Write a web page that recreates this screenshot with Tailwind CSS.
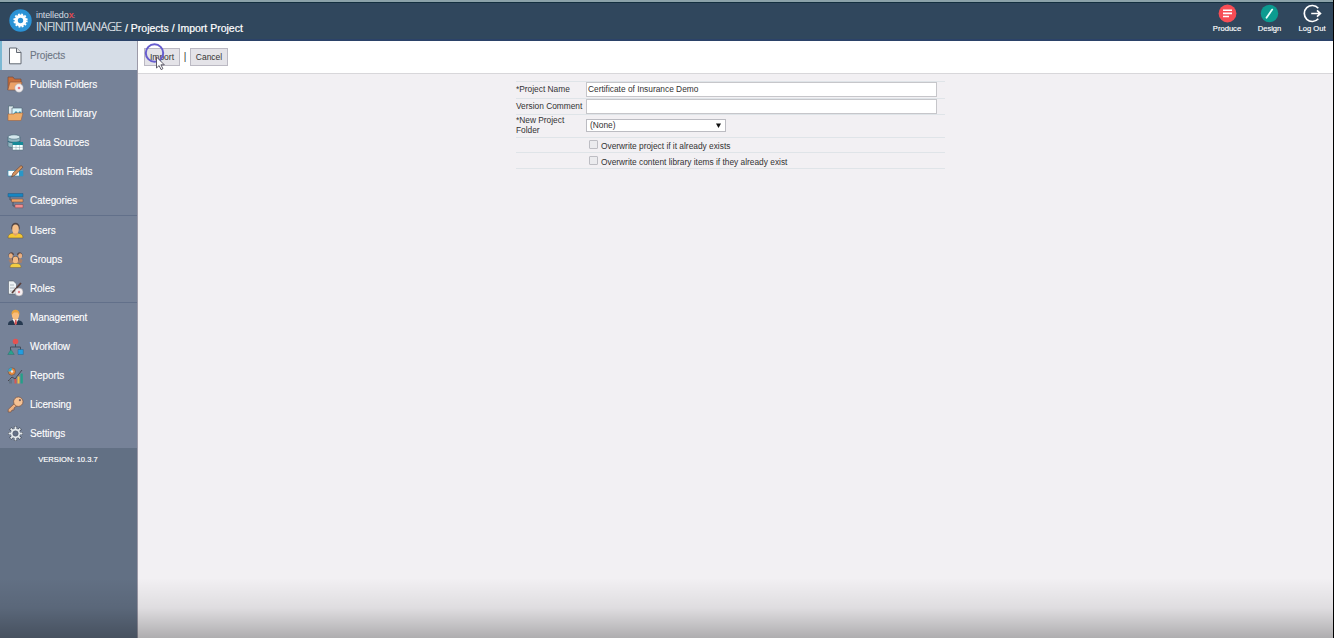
<!DOCTYPE html>
<html lang="en">
<head>
<meta charset="utf-8">
<title>Import Project</title>
<script src="https://cdn.jsdelivr.net/npm/@tailwindcss/browser@4"></script>
</head>
<body class="h-[638px] w-[1334px] overflow-hidden bg-[#f2f0f3] font-['Liberation_Sans',Arial,sans-serif]">
<div class="relative flex h-[638px] w-[1334px] flex-col border-r border-black">
  <header class="flex h-[41px] shrink-0 items-start justify-between border-t-2 border-b-2 border-t-[#8ba2a9] border-b-[#2b4268] bg-[#30475d] text-white shadow-[inset_0_1px_0_#132f3f]">
    <div class="flex pl-[9px]">
      <svg class="mt-[7px] h-[23px] w-[23px]" viewBox="0 0 23 23"><circle cx="11.5" cy="11.5" r="11.2" fill="#2b93d6"/><circle cx="11.5" cy="11.5" r="4.3" fill="none" stroke="#fff" stroke-width="3.2"/><circle cx="11.5" cy="11.5" r="6.3" fill="none" stroke="#fff" stroke-width="1.7" stroke-dasharray="1.8 1.5"/></svg>
      <div class="ml-[4px] mt-[8px] w-[89px] whitespace-nowrap">
        <div class="h-[10px] text-[9px] leading-[10px] tracking-[-0.1px] text-[#d5dce3]">intelledo<span class="font-bold text-[#e04a50]">x</span><span class="text-[6px]">:</span></div>
        <div class="h-[14px] font-['Open_Sans','Liberation_Sans',sans-serif] text-[12.200px] font-light leading-[14px] tracking-[-0.600px] text-[#e8edf2] [-webkit-text-stroke:0.2px_#e8edf2]">INFINITI<span class="ml-[2px]">MANAGE</span></div>
      </div>
      <div class="mt-[20px] whitespace-nowrap text-[10.500px] leading-[12px] [-webkit-text-stroke:0.2px_white]">/ Projects / Import Project</div>
    </div>
    <nav class="mt-[2px] flex text-center text-[7.600px] leading-[9px] [-webkit-text-stroke:0.15px_white]">
      <div class="flex w-[42px] flex-col items-center"><svg class="h-[19px] w-[19px]" viewBox="0 0 19 19"><circle cx="9.5" cy="9.5" r="8.9" fill="#f74d55"/><path d="M5 6.3h9M5 9.4h9M5 12.5h6" stroke="#fff" stroke-width="1.6"/></svg><span class="mt-px">Produce</span></div>
      <div class="flex w-[43px] flex-col items-center"><svg class="h-[19px] w-[19px]" viewBox="0 0 19 19"><circle cx="9.5" cy="9.5" r="8.7" fill="#0c9b90"/><path d="M6.5 13.8L12.2 5.6" stroke="#e6fffb" stroke-width="1.8" stroke-linecap="round"/></svg><span class="mt-px">Design</span></div>
      <div class="flex w-[42px] flex-col items-center"><svg class="h-[19px] w-[19px]" viewBox="0 0 19 19"><path d="M15.3 4.2A8 8 0 1 0 15.3 14.8M8.2 9.5h9M14 6.4l3.4 3.1L14 12.6" fill="none" stroke="#fff" stroke-width="1.7"/></svg><span class="mt-px whitespace-nowrap">Log Out</span></div>
    </nav>
  </header>

  <div class="flex min-h-0 flex-1">
    <aside class="w-[138px] shrink-0 border-r border-[#9c9aa8] bg-[#627084] text-[10px] tracking-[-0.120px] text-white">
      <div class="bg-[#768298] [-webkit-text-stroke:0.1px_currentColor]">
        <div class="flex h-[29px] items-center border-l-2 border-[#7bb8d3] bg-[#d6dde7] pl-[5px] text-[#6c7583]"><svg class="h-[18px] w-[17px]" viewBox="0 0 17 18"><path d="M2.5 1h7l4.5 4.5v11.300h-11.500z" fill="#fff" stroke="#626873"/><path d="M9.500 1v4.500h4.500" fill="#e8e8e8" stroke="#626873"/></svg><span class="ml-[6px]">Projects</span></div>
        <div class="flex h-[29px] items-center pl-[7px]"><svg class="h-[17px] w-[17px]" viewBox="0 0 17 17"><path d="M1 14V1h5l1.500 2H14v3" fill="#c96e3a" stroke="#744b3d" stroke-width=".7"/><path d="M.8 14L3 6h12l-1.500 8z" fill="#eca167" stroke="#84503c" stroke-width=".6"/><circle cx="12" cy="12" r="4.2" fill="#f3eef0" stroke="#aaa" stroke-width=".5"/><circle cx="12" cy="12" r="1.300" fill="#e9777c"/></svg><span class="ml-[6px]">Publish Folders</span></div>
        <div class="flex h-[29px] items-center pl-[7px]"><svg class="h-[17px] w-[17px]" viewBox="0 0 17 17"><path d="M1.500 1h5v11h-5z" fill="#dce6eb" stroke="#526d79" stroke-width=".7"/><path d="M5 3h10v7H5z" fill="#d8f5fb" stroke="#566b79" stroke-width=".7"/><path d="M6 9l3-3 2 2 2-2 2 3z" fill="#3498b6"/><path d="M1 9h6l1-1h8l-2 7.500H1z" fill="#efad69" stroke="#9b6344" stroke-width=".6"/></svg><span class="ml-[6px]">Content Library</span></div>
        <div class="flex h-[29px] items-center pl-[7px]"><svg class="h-[17px] w-[17px]" viewBox="0 0 17 17"><path d="M1 3v9c0 2 12 2 12 0V3" fill="#92b6c1" stroke="#456777" stroke-width=".6"/><ellipse cx="7" cy="3" rx="6" ry="2.200" fill="#d3e7ed" stroke="#456777" stroke-width=".6"/><path d="M1 7c1 2 11 2 12 0" fill="none" stroke="#366d80" stroke-width="1.300"/><path d="M5.500 9h10.500v7H5.500z" fill="#f5ffff" stroke="#54707b" stroke-width=".5"/><path d="M5.500 8h10.500v3H5.500z" fill="#168a98"/><path d="M9 11v5M12.500 11v5M6 13.500h10" stroke="#8ba4ae" stroke-width=".5"/></svg><span class="ml-[6px]">Data Sources</span></div>
        <div class="flex h-[29px] items-center pl-[7px]"><svg class="h-[17px] w-[17px]" viewBox="0 0 17 17"><path d="M1 7.500h15v5.500H1z" fill="#fbffff" stroke="#3d91b2" stroke-width=".7"/><path d="M12 8h4v5h-4z" fill="#2997c8"/><path d="M4.500 14l1.500-4L14 2.500l2 1.500-7.500 8z" fill="#d4935c" stroke="#69483c" stroke-width=".7"/></svg><span class="ml-[6px]">Custom Fields</span></div>
        <div class="flex h-[29px] items-center pl-[7px]"><svg class="h-[17px] w-[17px]" viewBox="0 0 17 17"><path d="M3 4v4h3M6 9v5h3" fill="none" stroke="#485265"/><path d="M1 1.500h15v3.300H1z" fill="#1686c2" stroke="#28547a" stroke-width=".5"/><path d="M4.500 7H16v3H4.500z" fill="#f0a466" stroke="#68473f" stroke-width=".5"/><path d="M8 12.500h8v3.300H8z" fill="#f38d8d" stroke="#744950" stroke-width=".5"/></svg><span class="ml-[6px]">Categories</span></div>
        <div class="border-t border-[#62708a]"></div>
        <div class="flex h-[29px] items-center pl-[7px]"><svg class="h-[17px] w-[17px]" viewBox="0 0 17 17"><path d="M1 16c0-4 3-4.500 5.500-5h4c2.500.5 5.500 1 5.500 5z" fill="#f5c832" stroke="#76603c" stroke-width=".6"/><path d="M6 9h5v3l-2.500 2L6 12z" fill="#dfa06d"/><path d="M4.500 7.500C2.500-1.500 14.500-1.500 12.500 7.500z" fill="#514647"/><ellipse cx="8.500" cy="7" rx="3.300" ry="4.500" fill="#f5c08b"/></svg><span class="ml-[6px]">Users</span></div>
        <div class="flex h-[29px] items-center pl-[7px]"><svg class="h-[17px] w-[17px]" viewBox="0 0 17 17"><path d="M1.500 5.500C1 0 7 0 7 4M10 4c0-4 6-4 5.500 1.500" fill="#5b4845"/><ellipse cx="3.800" cy="4.800" rx="2" ry="2.600" fill="#eab080"/><ellipse cx="13.200" cy="4.800" rx="2" ry="2.600" fill="#eab080"/><path d="M1.500 9l3-2h8l3 2-1 3H3z" fill="#a77f69"/><path d="M5.200 9.500c-1-6 7.600-6 6.600 0z" fill="#514647"/><ellipse cx="8.500" cy="9" rx="2.700" ry="3.400" fill="#f3ba83"/><path d="M3 16.500c0-4 3-4 5.500-4s5.500 0 5.500 4z" fill="#f2cd42" stroke="#76603c" stroke-width=".5"/></svg><span class="ml-[6px]">Groups</span></div>
        <div class="flex h-[28px] items-center pl-[7px]"><svg class="h-[17px] w-[17px]" viewBox="0 0 17 17"><path d="M1.500 1h5l3 3v10h-8z" fill="#eef2f4" stroke="#59616d" stroke-width=".6"/><path d="M3 5h4M3 8h5M3 11h4" stroke="#9ba4ac" stroke-width=".8"/><path d="M14 3L5 13" stroke="#593f3b" stroke-width="1.800"/><circle cx="12" cy="12" r="4" fill="#f5eff2" stroke="#999" stroke-width=".5"/><circle cx="12" cy="12" r="1.200" fill="#e6838a"/></svg><span class="ml-[6px]">Roles</span></div>
        <div class="border-t border-[#62708a]"></div>
        <div class="flex h-[29px] items-center pl-[7px]"><svg class="h-[17px] w-[17px]" viewBox="0 0 17 17"><path d="M1 16c0-4 3-4.500 5.500-5h4c2.500.5 5.500 1 5.500 5z" fill="#263950"/><path d="M5.500 10h6l-3 6z" fill="#f5f5f5"/><path d="M8 11h1.500l.5 4-1.300 1-1.200-1z" fill="#d35252"/><ellipse cx="8.500" cy="6" rx="3.600" ry="4.900" fill="#f8bd7b"/><path d="M4.700 6C3-1 14-1 12.300 6l-1.500-2.500H7z" fill="#e8a33d"/></svg><span class="ml-[6px]">Management</span></div>
        <div class="flex h-[29px] items-center pl-[7px]"><svg class="h-[17px] w-[17px]" viewBox="0 0 17 17"><path d="M8.500 5v4M3.500 13V9h10v4" fill="none" stroke="#454e5c"/><circle cx="8.500" cy="3.500" r="2.800" fill="#e65250"/><path d="M.8 16.500l3.200-5 3.200 5z" fill="#28a38d" stroke="#356c6c" stroke-width=".5"/><path d="M11 11.500h5.300v5H11z" fill="#239edf" stroke="#2b638c" stroke-width=".5"/></svg><span class="ml-[6px]">Workflow</span></div>
        <div class="flex h-[29px] items-center pl-[7px]"><svg class="h-[17px] w-[17px]" viewBox="0 0 17 17"><circle cx="4.800" cy="4.500" r="3.700" fill="#e78b3d" stroke="#544e53" stroke-width=".6"/><path d="M4.800 4.500V.8A3.700 3.700 0 0 0 1.100 4.500z" fill="#32a6d1"/><circle cx="5" cy="4.500" r="1.200" fill="#e8edf0"/><path d="M1 14l4-4 3 2 7-9" fill="none" stroke="#49464f"/><path d="M7.500 12h2v4.500h-2z" fill="#db5750"/><path d="M10.500 9.500h2v7h-2z" fill="#eebe45"/><path d="M13.500 6.500h2.300v10h-2.300z" fill="#24a088"/><path d="M2 12.500h3v4H2z" fill="#657585"/></svg><span class="ml-[6px]">Reports</span></div>
        <div class="flex h-[29px] items-center pl-[7px]"><svg class="h-[17px] w-[17px]" viewBox="0 0 17 17"><path d="M8.500 6.500L1.200 13.500V16H4l1-2h2v-2l3.800-3" fill="#edb181" stroke="#78523f" stroke-width=".7"/><circle cx="11.300" cy="5.700" r="4.700" fill="#f5c294" stroke="#78523f" stroke-width=".7"/><circle cx="12.900" cy="4.200" r="1.100" fill="#796363"/></svg><span class="ml-[6px]">Licensing</span></div>
        <div class="flex h-[29px] items-center pl-[7px]"><svg class="h-[17px] w-[17px]" viewBox="0 0 17 17"><g stroke="#444d5b" stroke-width="3.200"><path d="M8.500 1v15M1 8.500h15M3.300 3.300l10.400 10.400M13.700 3.300L3.300 13.700"/></g><g stroke="#e4e9ed" stroke-width="1.900"><path d="M8.500 1.500v14M1.500 8.500h14M3.700 3.700l9.600 9.600M13.300 3.700l-9.600 9.600"/></g><circle cx="8.500" cy="8.500" r="4.700" fill="#e4e9ed"/><circle cx="8.500" cy="8.500" r="2.700" fill="#657187" stroke="#48515f" stroke-width=".5"/></svg><span class="ml-[6px]">Settings</span></div>
      </div>
      <div class="pt-[7px] pr-[1px] text-center text-[7.600px] leading-[10px] tracking-normal [-webkit-text-stroke:0.15px_white]">VERSION: 10.3.7</div>
    </aside>

    <main class="min-w-0 flex-1 text-[8.350px] text-[#333]">
      <div class="flex h-[33px] items-center border-b border-[#d8d7da] bg-white pl-[6px]">
        <button class="h-[18px] w-[36px] border border-[#bbb9c3] bg-[#e4e3e8] text-[8.500px] leading-[16px]">Import</button>
        <span class="w-[10px] text-center text-[10px] leading-[14px]">|</span>
        <button class="h-[18px] w-[38px] border border-[#bbb9c3] bg-[#e4e3e8] text-[8.500px] leading-[16px]">Cancel</button>
      </div>
      <form class="ml-[378px] mt-[7px] w-[429px] border-t border-[#dfe4e8]">
        <div class="flex h-[17px] items-center border-b border-[#dfe4e8] pb-px"><label class="w-[70px] whitespace-nowrap">*Project Name</label><input class="h-[15px] w-[351px] border border-[#c6c6ca] bg-white px-[1px] pb-px" value="Certificate of Insurance Demo"></div>
        <div class="flex h-[16px] items-center border-b border-[#dfe4e8]"><label class="w-[70px] whitespace-nowrap">Version Comment</label><input class="h-[15px] w-[351px] border border-[#c6c6ca] bg-white px-[1px]"></div>
        <div class="flex h-[23px] items-center border-b border-[#dfe4e8] pb-[2px]"><label class="w-[70px] leading-[10px]">*New Project<br>Folder</label><div class="flex h-[13px] w-[140px] items-center justify-between border border-[#bcbcc2] bg-white pl-[3px] pr-[4px]"><span>(None)</span><svg class="h-[5px] w-[5px]" viewBox="0 0 5 5"><path d="M0 .5h5L2.500 5z" fill="#111"/></svg></div></div>
        <div class="flex h-[15px] items-center border-b border-[#dfe4e8] pl-[73px]"><span class="mb-[2px] h-[9px] w-[9px] rounded-[1px] border border-[#bdbdc3] bg-[#ebebee]"></span><span class="ml-[3px] mt-[2px]">Overwrite project if it already exists</span></div>
        <div class="flex h-[16px] items-center border-b border-[#dfe4e8] pl-[73px]"><span class="mb-px h-[9px] w-[9px] rounded-[1px] border border-[#bdbdc3] bg-[#ebebee]"></span><span class="ml-[3px] mt-[3px]">Overwrite content library items if they already exist</span></div>
      </form>
    </main>
  </div>
  <svg class="absolute left-[144px] top-[43px] h-[28px] w-[24px]" viewBox="0 0 24 28"><circle cx="10.500" cy="10" r="8.700" fill="none" stroke="#675dcf" stroke-width="2"/><path d="M12.500 14v11l2.600-2.400 2 4 1.800-.9-2-3.900h3.400z" fill="#fff" stroke="#4d4a58" stroke-width=".9"/></svg>
  <div class="pointer-events-none absolute bottom-0 left-0 h-[60px] w-[1333px] bg-linear-to-b from-black/0 via-black/8 to-black/28"></div>
</div>
</body>
</html>
